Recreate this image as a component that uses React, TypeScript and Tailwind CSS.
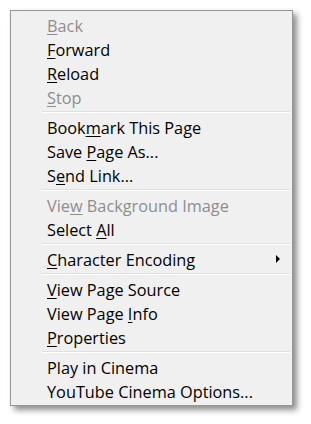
import React from "react";

type Item = {
	label: string;
	key?: number; // index of access-key letter
	disabled?: boolean;
	submenu?: boolean;
};

const groups: Item[][] = [
	[
		{ label: "Back", key: 0, disabled: true },
		{ label: "Forward", key: 0 },
		{ label: "Reload", key: 0 },
		{ label: "Stop", key: 0, disabled: true },
	],
	[
		{ label: "Bookmark This Page", key: 4 },
		{ label: "Save Page As...", key: 5 },
		{ label: "Send Link...", key: 1 },
	],
	[
		{ label: "View Background Image", key: 3, disabled: true },
		{ label: "Select All", key: 7 },
	],
	[{ label: "Character Encoding", key: 0, submenu: true }],
	[
		{ label: "View Page Source", key: 0 },
		{ label: "View Page Info", key: 10 },
		{ label: "Properties", key: 0 },
	],
	[{ label: "Play in Cinema" }, { label: "YouTube Cinema Options..." }],
];

const MenuItem = ({ item }: { item: Item }) => {
	const { label, key } = item;
	return (
		<div
			className={`flex h-[24px] items-center justify-between pl-[36px] pr-[12px] pt-[2px] ${
				item.disabled ? "text-[#8d8d8d]" : "text-black"
			}`}
		>
			<span>
				{key === undefined ? (
					label
				) : (
					<>
						{label.slice(0, key)}
						<span className="underline decoration-1 underline-offset-[2px]">
							{label[key]}
						</span>
						{label.slice(key + 1)}
					</>
				)}
			</span>
			{item.submenu && (
				<span className="-mt-[2px] block h-0 w-0 border-y-[4px] border-l-[4px] border-y-transparent border-l-black" />
			)}
		</div>
	);
};

const Separator = () => (
	<div className="flex h-[6px] items-center pl-[31px] pr-[2px]">
		<div className="flex h-[2px] w-full flex-col">
			<div className="h-px bg-[#e0e0e0]" />
			<div className="h-px bg-white" />
		</div>
	</div>
);

export default function App() {
	return (
		<div className="h-[424px] w-[311px] bg-white pl-[10px] pt-[10px]">
			<div
				className="w-[283px] border border-[#979797] bg-[#f0f0f0] py-[2px] text-[16.3px] leading-none shadow-[4px_4px_6px_rgba(0,0,0,0.45)]"
				style={{ fontFamily: '"Open Sans", "Noto Sans", sans-serif' }}
			>
				{groups.map((group, i) => (
					<React.Fragment key={i}>
						{i > 0 && <Separator />}
						{group.map((item) => (
							<MenuItem key={item.label} item={item} />
						))}
					</React.Fragment>
				))}
			</div>
		</div>
	);
}
